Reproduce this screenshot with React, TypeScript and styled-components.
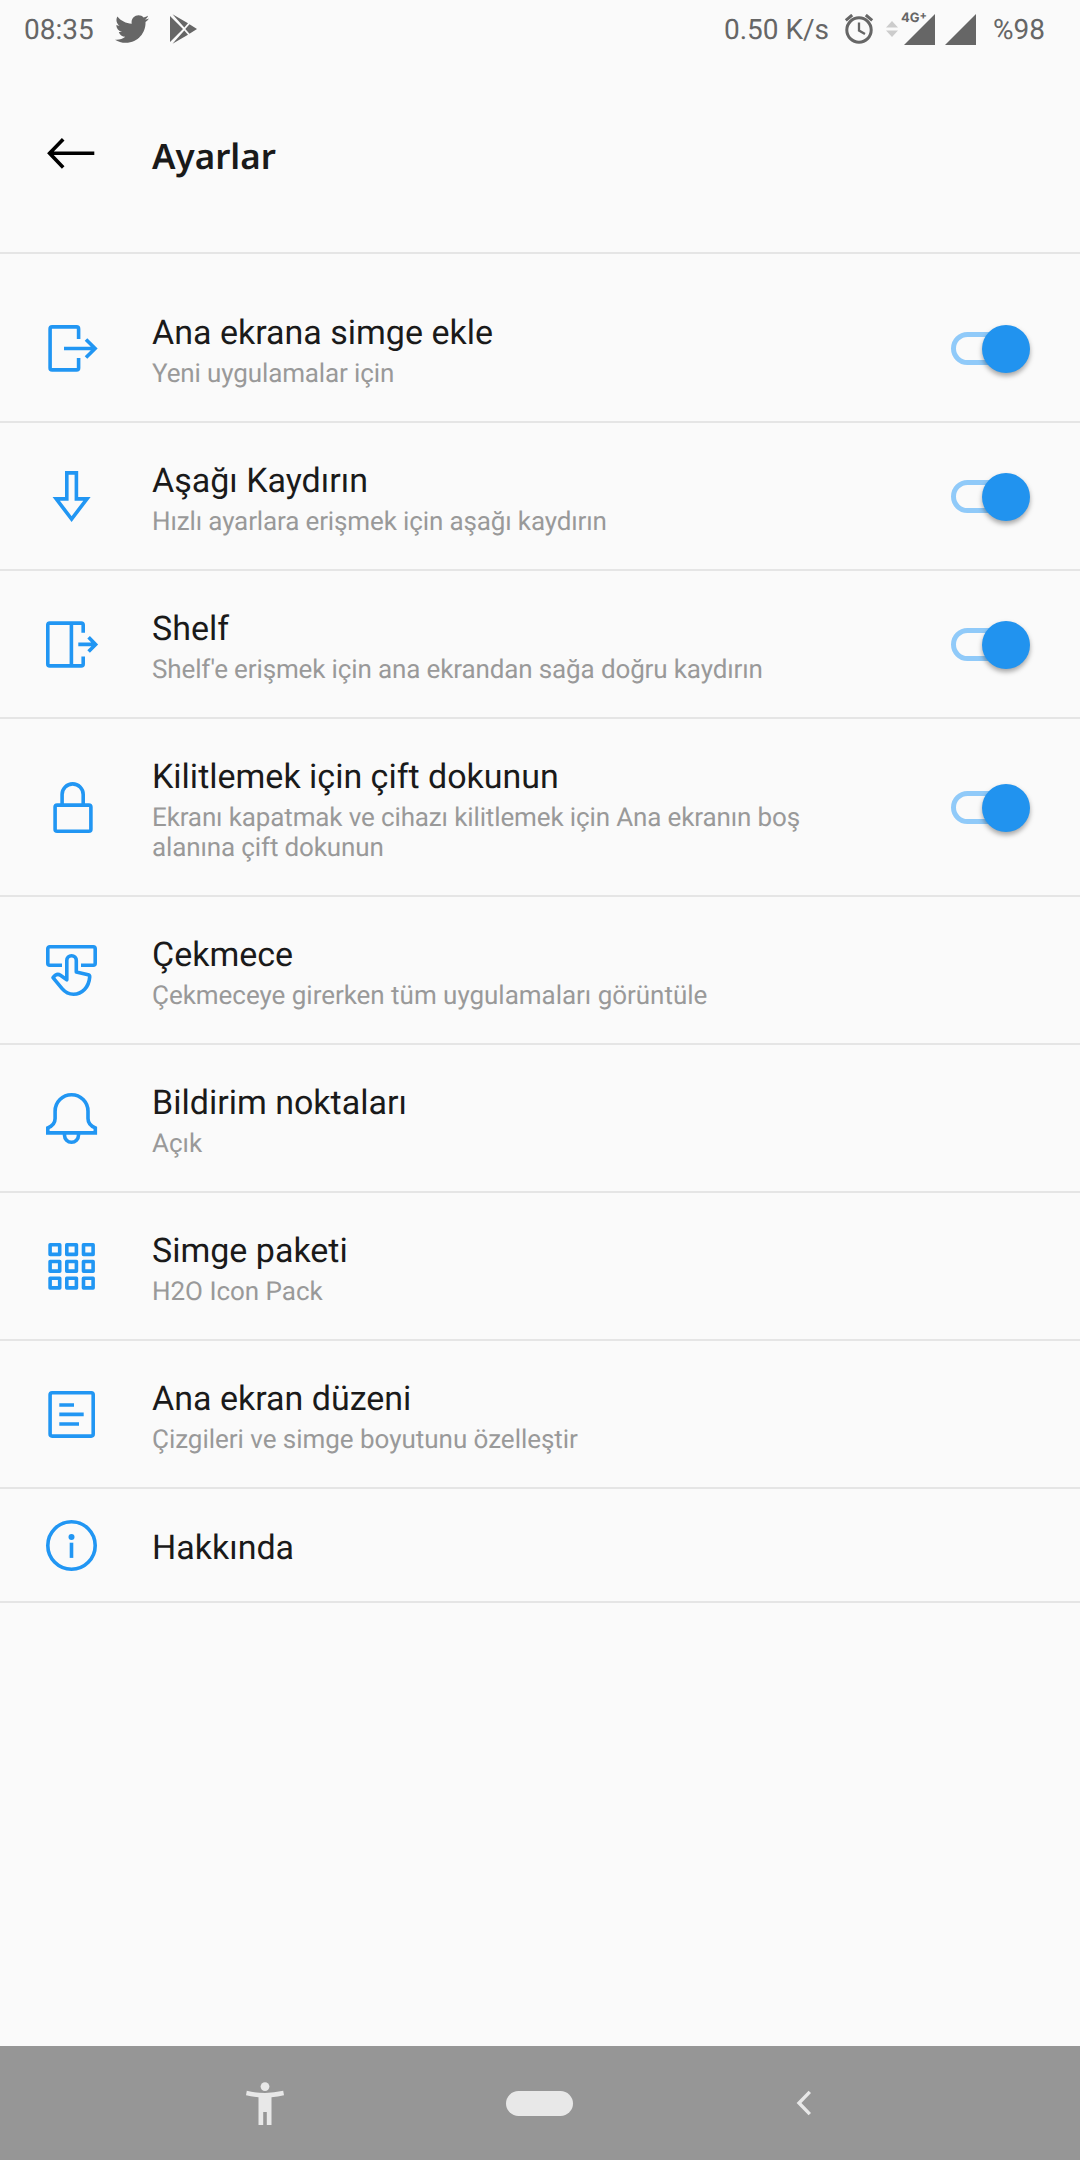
import React from "react";
import styled, { createGlobalStyle } from "styled-components";
import { FaTwitter } from "react-icons/fa";

const GlobalStyle = createGlobalStyle`
  * { box-sizing: border-box; }
  body { margin: 0; background: #fafafa; }
`;

const Screen = styled.div`
  width: 1080px;
  height: 2160px;
  display: flex;
  flex-direction: column;
  background: #fafafa;
  font-family: Roboto, "Noto Sans", sans-serif;
  text-rendering: geometricPrecision;
  color: #1a1a1a;
  overflow: hidden;
`;

const StatusBar = styled.header`
  height: 58px;
  flex: none;
  display: flex;
  justify-content: space-between;
  padding: 0 34px 0 24px;
  color: #666;
`;

const StatusGroup = styled.div`
  display: flex;
  align-items: center;
`;

const StatusText = styled.span<{ $gap?: number; $width?: number }>`
  width: ${(p) => (p.$width ? `${p.$width}px` : "auto")};
  padding-top: 1px;
  font-size: 28px;
  line-height: 34px;
  margin-right: ${(p) => p.$gap ?? 0}px;
  white-space: nowrap;
`;

const Glyph = styled.svg<{ $gap?: number }>`
  display: block;
  flex: none;
  margin-right: ${(p) => p.$gap ?? 0}px;
`;

const Bird = styled(FaTwitter)`
  width: 34px;
  height: 34px;
  margin-right: 21px;
`;

const Signal = styled.div`
  position: relative;
  margin-right: 10px;
`;

const NetworkType = styled.span`
  position: absolute;
  left: -3px;
  top: -4px;
  display: flex;
  font: 700 13px/16px Inter, Roboto, sans-serif;
`;

const Plus = styled.span`
  font-size: 11px;
  line-height: 11px;
`;

const TitleBar = styled.div`
  height: 196px;
  flex: none;
  display: flex;
  align-items: center;
  padding: 0 0 0 44px;
  border-bottom: 2px solid #e5e5e5;
`;

const Heading = styled.h1`
  margin: 3px 0 0 52px;
  font: 600 35px/48px "Noto Sans", sans-serif;
`;

const BackIcon = styled.svg`
  display: block;
  flex: none;
  margin-bottom: 4px;
`;

const List = styled.main`
  flex: 1;
  padding-top: 21px;
`;

const Row = styled.section<{ $height: number }>`
  height: ${(p) => p.$height}px;
  display: flex;
  align-items: center;
  padding: 0 48px 0 44px;
  border-bottom: 2px solid #e5e5e5;
`;

const RowIcon = styled.svg`
  display: block;
  flex: none;
  width: 56px;
  height: 56px;
  fill: none;
  stroke: #2196f3;
  stroke-width: 3.6;
`;

const Copy = styled.div`
  flex: none;
  width: 700px;
  margin-left: 52px;
  padding-top: 5px;
`;

const Name = styled.div`
  font-size: 34px;
  line-height: 44px;
  white-space: nowrap;
`;

const Detail = styled.div<{ $tight?: boolean }>`
  margin: 4px 0 2px;
  font-size: 26px;
  line-height: 30px;
  letter-spacing: ${(p) => (p.$tight ? -0.13 : -0.03)}px;
  color: #999;
  white-space: pre-line;
`;

const Switch = styled.div`
  display: flex;
  align-items: center;
  margin: 1px 2px 0 auto;
`;

const Track = styled.div`
  width: 60px;
  height: 33px;
  border: 5px solid #90caf9;
  border-radius: 17px;
`;

const Thumb = styled.div`
  width: 48px;
  height: 48px;
  margin-left: -29px;
  border-radius: 50%;
  background: #2193ef;
  box-shadow: 0 3px 5px rgba(0, 0, 0, 0.34);
`;

const NavBar = styled.nav`
  height: 114px;
  flex: none;
  display: grid;
  grid-template-columns: 506px 67px 507px;
  align-items: center;
  background: #969696;
  color: #e8e8e8;
`;

const NavSide = styled.div<{ $left: number }>`
  padding-left: ${(p) => p.$left}px;
`;

const HomePill = styled.div`
  height: 25px;
  border-radius: 12.5px;
  background: #e8e8e8;
`;

const cells = [0, 1, 2].flatMap((r) => [0, 1, 2].map((c) => [6.1 + c * 16.7, 6.8 + r * 16.75]));

const icons: Record<string, React.ReactNode> = {
  add: (
    <>
      <path d="M34.6 19V8.9a2 2 0 0 0-2-2H8.1a2 2 0 0 0-2 2v39a2 2 0 0 0 2 2h24.5a2 2 0 0 0 2-2V38" />
      <path d="M20 28.5h31.2M42 19.4l9.1 9.1-9.1 9.1" />
    </>
  ),
  down: <path d="M22.8 4.9h9.6v26H43L27.6 51 12.2 30.9h10.6z" />,
  shelf: (
    <>
      <path d="M39.2 16.7V9.1a2 2 0 0 0-2-2H5.8a2 2 0 0 0-2 2v38.8a2 2 0 0 0 2 2h31.4a2 2 0 0 0 2-2v-7.3M27.4 7.1v42.8" />
      <path d="M34.3 28.4h17M44.6 21.3l7 7.1-7 7.1" />
    </>
  ),
  lock: (
    <>
      <rect x="11.1" y="26.1" width="35.8" height="26.1" rx="2" />
      <path d="M18.1 26V15.4a10.55 10.55 0 0 1 21.1 0V26" />
    </>
  ),
  drawer: (
    <>
      <path d="M18 23.3H5.8a2 2 0 0 1-2-2V6.8a2 2 0 0 1 2-2h43.4a2 2 0 0 1 2 2v14.5a2 2 0 0 1-2 2H37" />
      <path
        strokeLinejoin="round"
        d="M22.8 37.8V18.5a4.75 4.75 0 0 1 9.5 0V30l11.8 2.7q1.8.5 1.6 2.3C44.9 45.4 38 52.2 29.5 52.2c-5.2 0-8.5-2.2-11.4-5.6L9 35.6c2.5-3.2 5.2-3.8 7.4-2.3z"
      />
    </>
  ),
  bell: (
    <>
      <path d="M3.8 42.9v-5c4.4-1.8 7.3-4.2 7.3-9.4v-7.3a16.45 16.45 0 0 1 32.9 0v7.3c0 5.2 2.9 7.6 7.3 9.4v5z" />
      <path d="M20.5 43.5v1.7a7 7 0 0 0 14 0v-1.7" />
    </>
  ),
  grid: (
    <>
      {cells.map(([x, y]) => (
        <rect key={`${x}-${y}`} x={x} y={y} width="9.6" height="9.6" strokeLinejoin="round" />
      ))}
    </>
  ),
  layout: (
    <>
      <rect x="6.1" y="6.8" width="43.1" height="43.3" rx="2" />
      <path d="M15.3 19H30M15.3 28.4h24.4M15.3 38H35" />
    </>
  ),
  info: (
    <>
      <circle cx="27.5" cy="28.5" r="23.7" />
      <path d="M27.5 25.7v15.2" />
      <circle cx="27.5" cy="20.1" r="3" fill="#2196f3" stroke="none" />
    </>
  ),
};

type Item = { icon: string; name: string; detail?: string; on?: boolean; height?: number };

const items: Item[] = [
  { icon: "add", name: "Ana ekrana simge ekle", detail: "Yeni uygulamalar için", on: true },
  { icon: "down", name: "Aşağı Kaydırın", detail: "Hızlı ayarlara erişmek için aşağı kaydırın", on: true },
  { icon: "shelf", name: "Shelf", detail: "Shelf'e erişmek için ana ekrandan sağa doğru kaydırın", on: true },
  {
    icon: "lock",
    name: "Kilitlemek için çift dokunun",
    detail: "Ekranı kapatmak ve cihazı kilitlemek için Ana ekranın boş\nalanına çift dokunun",
    on: true,
    height: 178,
  },
  { icon: "drawer", name: "Çekmece", detail: "Çekmeceye girerken tüm uygulamaları görüntüle" },
  { icon: "bell", name: "Bildirim noktaları", detail: "Açık" },
  { icon: "grid", name: "Simge paketi", detail: "H2O Icon Pack" },
  { icon: "layout", name: "Ana ekran düzeni", detail: "Çizgileri ve simge boyutunu özelleştir" },
  { icon: "info", name: "Hakkında", height: 114 },
];

export default function App() {
  return (
    <Screen>
      <GlobalStyle />
      <StatusBar>
        <StatusGroup>
          <StatusText $width={71} $gap={20}>08:35</StatusText>
          <Bird />
          <Glyph width="28" height="30" viewBox="0 0 28 30" fill="currentColor">
            <path d="M0 2v26l13-13zM2.5.2L18 9.3l-3.7 4.2zM2.5 29.8L18 20.7l-3.7-4.2zM19.5 10.2l7.5 4.8-7.5 4.8-4.2-4.8z" />
          </Glyph>
        </StatusGroup>
        <StatusGroup>
          <StatusText $gap={15}>0.50 K/s</StatusText>
          <Glyph $gap={12} width="30" height="30" viewBox="0 0 30 30" fill="none" stroke="currentColor" strokeWidth="3">
            <circle cx="15" cy="16" r="12.2" />
            <path d="M15 8.5v8l6 3.6" strokeWidth="2.3" />
            <path d="M1.8 6.3L8.2 1M28.2 6.3L21.8 1" />
          </Glyph>
          <Glyph $gap={6} width="12" height="16" viewBox="0 0 12 16" fill="#ccc">
            <path d="M0 6.5L6 0l6 6.5zM0 9.5L6 16l6-6.5z" />
          </Glyph>
          <Signal>
            <Glyph width="31" height="31" viewBox="0 0 31 31" fill="currentColor">
              <path d="M31 0v31H0z" />
            </Glyph>
            <NetworkType>
              4G<Plus>+</Plus>
            </NetworkType>
          </Signal>
          <Glyph $gap={17} width="31" height="31" viewBox="0 0 31 31" fill="currentColor">
            <path d="M31 0v31H0z" />
          </Glyph>
          <StatusText $width={53}>%98</StatusText>
        </StatusGroup>
      </StatusBar>

      <TitleBar>
        <BackIcon width="56" height="56" viewBox="0 0 56 56" fill="none" stroke="#000" strokeWidth="3.6">
          <path d="M50.3 28.3H6M19.2 14.2L5.6 28.3l13.6 14.1" />
        </BackIcon>
        <Heading>Ayarlar</Heading>
      </TitleBar>

      <List>
        {items.map((item) => (
          <Row key={item.name} $height={item.height ?? 148}>
            <RowIcon viewBox="0 0 56 56">{icons[item.icon]}</RowIcon>
            <Copy>
              <Name>{item.name}</Name>
              {item.detail && <Detail $tight={item.on}>{item.detail}</Detail>}
            </Copy>
            {item.on && (
              <Switch>
                <Track />
                <Thumb />
              </Switch>
            )}
          </Row>
        ))}
      </List>

      <NavBar>
        <NavSide $left={246}>
          <Glyph width="38" height="43" viewBox="0 0 38 43" fill="currentColor">
            <circle cx="19" cy="4.6" r="4.4" />
            <path d="M.8 8.8Q19 13 37.2 8.8l.8 4.4q-6 1.4-12.5 2V43h-4.7V30h-3.6v13h-4.7V15.2Q6 14.600 0 13.200z" />
          </Glyph>
        </NavSide>
        <HomePill />
        <NavSide $left={223}>
          <Glyph width="16" height="26" viewBox="0 0 16 26" fill="none" stroke="currentColor" strokeWidth="3.4">
            <path d="M13.8 1.9L3 13l10.8 11.1" />
          </Glyph>
        </NavSide>
      </NavBar>
    </Screen>
  );
}
